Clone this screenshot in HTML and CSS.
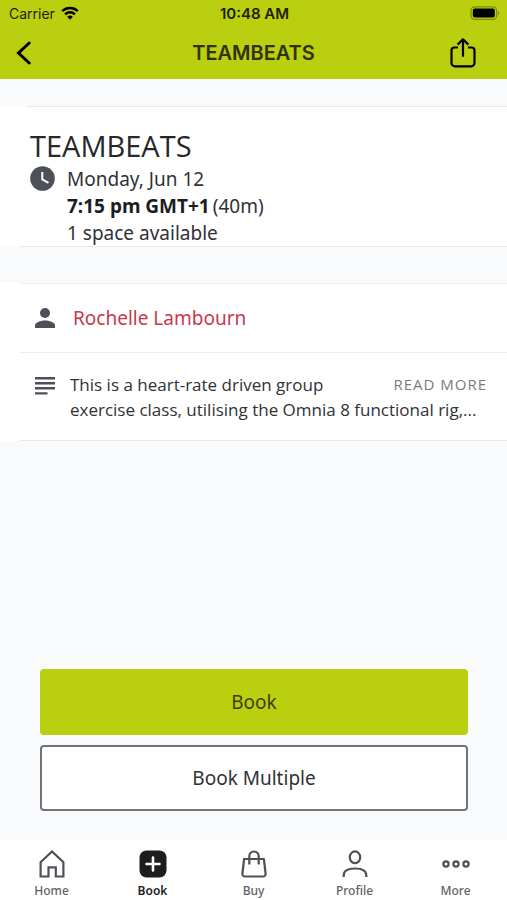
FILE: index.html
```html
<!DOCTYPE html>
<html lang="en">
<head>
<meta charset="utf-8">
<meta name="viewport" content="width=device-width, initial-scale=1">
<title>TEAMBEATS</title>
<link rel="stylesheet" href="styles.css">
</head>
<body>
<header class="header">
  <div class="status">
    <div class="status-left">
      <span>Carrier</span>
      <svg class="wifi" width="18" height="14" viewBox="0 0 18 14" aria-hidden="true"><path d="M1.2 5.2a11.4 11.4 0 0 1 15.6 0M4.1 8.3a7.1 7.1 0 0 1 9.8 0" fill="none" stroke="#000" stroke-width="2.5"/><path d="M6.2 10.8a4.2 4.2 0 0 1 5.6 0L9 13.7z"/></svg>
    </div>
    <div class="clock">10:48 AM</div>
    <div class="status-right">
      <svg width="30" height="14" viewBox="0 0 30 14" aria-hidden="true"><rect x="1" y=".8" width="25.6" height="12.6" rx="3.6" fill="none" stroke="#7d8b10" stroke-width="1.2"/><rect x="2.8" y="2.6" width="22" height="9" rx="2" fill="#000"/><path d="M28 5v4.200c1.700-.6 1.700-3.600 0-4.200z" fill="#7d8b10"/></svg>
    </div>
  </div>
  <div class="navbar">
    <button class="icon-button" type="button" aria-label="Back">
      <svg width="16" height="24" viewBox="0 0 16 24" aria-hidden="true"><path d="M13.200 2 2.500 12l10.700 10" fill="none" stroke="#000" stroke-width="3" stroke-linecap="round" stroke-linejoin="miter"/></svg>
    </button>
    <h1 class="nav-title">TEAMBEATS</h1>
    <button class="icon-button share" type="button" aria-label="Share">
      <svg width="26" height="30" viewBox="0 0 26 30" aria-hidden="true"><path d="M8 9.500H4.500a3 3 0 0 0-3 3V25a3.300 3.300 0 0 0 3.300 3.300h16.400a3.300 3.300 0 0 0 3.300-3.300V12.500a3 3 0 0 0-3-3H18M13 18.800V2M7.600 6.600 13 1.300l5.400 5.300" fill="none" stroke="#000" stroke-width="2.200" stroke-linejoin="round"/></svg>
    </button>
  </div>
</header>
<main class="main">
  <section class="summary">
    <h2 class="class-name">TEAMBEATS</h2>
    <div class="when">
      <svg class="when-icon" width="25" height="25" viewBox="0 0 25 25" aria-hidden="true"><circle cx="12.500" cy="12.500" r="12.300" fill="#4d5059"/><path d="M12.300 6v7.500l6.200 3.300" fill="none" stroke="#fff" stroke-width="2"/></svg>
      <div class="when-text">
        <div>Monday, Jun 12</div>
        <div class="time"><strong>7:15 pm GMT+1</strong><span>(40m)</span></div>
        <div>1 space available</div>
      </div>
    </div>
  </section>
  <section class="details">
    <div class="row instructor">
      <svg class="row-icon" width="20" height="20" viewBox="0 0 20 20" aria-hidden="true"><circle cx="10" cy="5" r="5" fill="#4d5059"/><path d="M0 20v-2.500c0-3.300 6-5 10-5s10 1.700 10 5V20z" fill="#4d5059"/></svg>
      <a class="instructor-link" href="#instructor">Rochelle Lambourn</a>
    </div>
    <div class="row about">
      <svg class="row-icon lines" width="20" height="18" viewBox="0 0 20 18" aria-hidden="true"><path d="M0 1.200h20M0 6.200h20M0 11.200h20M0 16.400h12.500" stroke="#4d5059" stroke-width="2.400"/></svg>
      <div class="about-text">
        <div class="about-top">
          <span>This is a heart-rate driven group</span>
          <a class="read-more" href="#about">READ MORE</a>
        </div>
        <div>exercise class, utilising the Omnia 8 functional rig,...</div>
      </div>
    </div>
  </section>
  <div class="actions">
    <button class="action primary" type="button">Book</button>
    <button class="action" type="button">Book Multiple</button>
  </div>
</main>
<nav class="tabs" aria-label="Main">
  <a class="tab" href="#home">
    <svg width="28" height="28" viewBox="0 0 28 28" aria-hidden="true"><path d="M2.600 12.200 14 1.500l11.400 10.700v14.300h-7.600v-9.200h-7.300v9.200H2.600z" fill="none" stroke="#4d5054" stroke-width="2.200"/></svg>
    <span>Home</span>
  </a>
  <a class="tab active" href="#book" aria-current="page">
    <svg width="28" height="28" viewBox="0 0 28 28" aria-hidden="true"><rect x=".5" y=".5" width="27" height="27" rx="7" fill="#1c1d1f"/><path d="M14 7.500v13M7.500 14h13" stroke="#fff" stroke-width="2.600" stroke-linecap="round"/></svg>
    <span>Book</span>
  </a>
  <a class="tab" href="#buy">
    <svg width="28" height="28" viewBox="0 0 28 28" aria-hidden="true"><path d="M4.100 9h19.800l1.700 14.500a2.600 2.600 0 0 1-2.600 3H5a2.600 2.600 0 0 1-2.600-3zM9.300 14.500V6.200a4.700 4.700 0 0 1 9.400 0v8.300" fill="none" stroke="#4d5054" stroke-width="2.200" stroke-linejoin="round"/></svg>
    <span>Buy</span>
  </a>
  <a class="tab" href="#profile">
    <svg width="28" height="28" viewBox="0 0 28 28" aria-hidden="true"><ellipse cx="14" cy="7.300" rx="5.200" ry="5.900" fill="none" stroke="#4d5054" stroke-width="2.200"/><path d="M2.700 27v-1.500c0-4.600 4.500-7 11.300-7s11.300 2.400 11.300 7V27" fill="none" stroke="#4d5054" stroke-width="2.200"/></svg>
    <span>Profile</span>
  </a>
  <a class="tab" href="#more">
    <svg width="28" height="28" viewBox="0 0 28 28" aria-hidden="true"><g fill="none" stroke="#4d5054" stroke-width="2.200"><circle cx="4" cy="14" r="2.600"/><circle cx="14" cy="14" r="2.600"/><circle cx="24" cy="14" r="2.600"/></g></svg>
    <span>More</span>
  </a>
</nav>
</body>
</html>
```
FILE: styles.css
```css
* {
  box-sizing: border-box;
}

body {
  margin: 0;
  min-height: 100vh;
  display: flex;
  flex-direction: column;
  background: #f8fafc;
  color: #303236;
  font-family: "Noto Sans", "Open Sans", sans-serif;
  font-size: 19px;
}

a {
  color: inherit;
  text-decoration: none;
}

button {
  font: inherit;
  color: inherit;
}

svg {
  display: block;
  flex: none;
}

h1, h2, p {
  margin: 0;
}

.header {
  background: #bacf10;
  font-family: Inter, sans-serif;
}

.status {
  display: grid;
  grid-template-columns: 1fr auto 1fr;
  align-items: center;
  height: 26px;
  padding: 0 7px 0 9px;
  font-size: 14px;
  color: #1d2000;
}

.status-left {
  display: flex;
  align-items: center;
  gap: 6px;
}

.clock {
  font-size: 15px;
  font-weight: 600;
}

.status-right {
  display: flex;
  justify-content: flex-end;
}

.navbar {
  display: grid;
  grid-template-columns: 1fr auto 1fr;
  align-items: center;
  height: 53px;
  padding: 0 16px;
}

.icon-button {
  display: flex;
  justify-self: start;
  padding: 0;
  border: 0;
  background: none;
}

.share {
  justify-self: end;
  margin-right: 15px;
}

.nav-title {
  font-size: 20px;
  font-weight: 600;
  color: #2f3307;
}

.main {
  flex: 1;
  display: flex;
  flex-direction: column;
}

.summary {
  margin-top: 27px;
  padding: 20px 20px 0 30px;
  background:
    linear-gradient(#e6e8eb, #e6e8eb) 26px 0 / 100% 1px no-repeat,
    linear-gradient(#e6e8eb, #e6e8eb) 20px 100% / 100% 1px no-repeat,
    #fff;
}

.class-name {
  font-family: "Open Sans", "Noto Sans", sans-serif;
  font-size: 29px;
  font-weight: 400;
  line-height: 40px;
  color: #26282b;
}

.when {
  display: flex;
  align-items: flex-start;
  gap: 12px;
  line-height: 27px;
}

.time {
  display: flex;
  gap: 3px;
}

.time strong {
  color: #1c1d1f;
}

.details {
  margin-top: 36px;
  padding-left: 20px;
  background: #fff;
}

.row {
  display: flex;
  padding-left: 15px;
  border-top: 1px solid #eceef0;
}

.instructor {
  align-items: center;
  gap: 18px;
  height: 69px;
}

.instructor-link {
  color: #c53a4c;
}

.about {
  gap: 15px;
  padding: 19px 20px 18px 15px;
  border-bottom: 1px solid #e6e8eb;
}

.lines {
  margin-top: 5px;
}

.about-text {
  flex: 1;
  font-family: "Open Sans", "Noto Sans", sans-serif;
  font-size: 17px;
  line-height: 25px;
}

.about-top {
  display: flex;
  justify-content: space-between;
}

.read-more {
  font-size: 15px;
  letter-spacing: 1px;
  color: #777a7e;
}

.actions {
  display: flex;
  flex-direction: column;
  gap: 10px;
  margin-top: auto;
  padding: 0 39px 29px 40px;
}

.action {
  height: 66px;
  border: 2px solid #707378;
  border-radius: 4px;
  background: #fff;
}

.primary {
  border-color: #bacf10;
  background: #bacf10;
  color: #3b4008;
}

.tabs {
  display: grid;
  grid-template-columns: repeat(5, 1fr);
  padding: 10px 1px 0;
  height: 60px;
  background: #fff;
  font-size: 12px;
  font-weight: 500;
  line-height: 18px;
  color: #606367;
}

.tab {
  display: flex;
  flex-direction: column;
  align-items: center;
  gap: 4px;
}

.active {
  color: #1c1d1f;
  font-weight: 600;
}
```
